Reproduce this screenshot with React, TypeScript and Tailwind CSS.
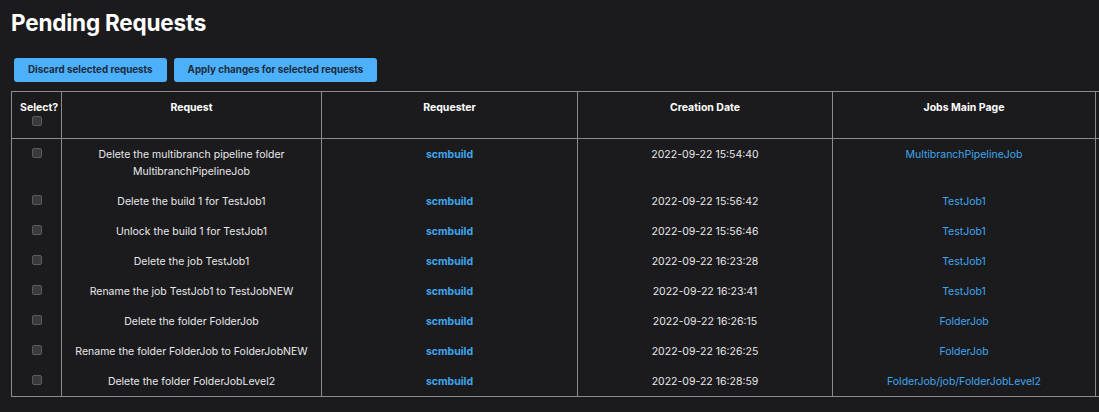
import React from 'react';

const rows = [
    { request: ['Delete the multibranch pipeline folder', 'MultibranchPipelineJob'], date: '2022-09-22 15:54:40', job: 'MultibranchPipelineJob' },
    { request: ['Delete the build 1 for TestJob1'], date: '2022-09-22 15:56:42', job: 'TestJob1' },
    { request: ['Unlock the build 1 for TestJob1'], date: '2022-09-22 15:56:46', job: 'TestJob1' },
    { request: ['Delete the job TestJob1'], date: '2022-09-22 16:23:28', job: 'TestJob1' },
    { request: ['Rename the job TestJob1 to TestJobNEW'], date: '2022-09-22 16:23:41', job: 'TestJob1' },
    { request: ['Delete the folder FolderJob'], date: '2022-09-22 16:26:15', job: 'FolderJob' },
    { request: ['Rename the folder FolderJob to FolderJobNEW'], date: '2022-09-22 16:26:25', job: 'FolderJob' },
    { request: ['Delete the folder FolderJobLevel2'], date: '2022-09-22 16:28:59', job: 'FolderJob/job/FolderJobLevel2' },
];

const Box = () => (
    <span className="inline-block w-[10px] h-[10px] rounded-[2px] border border-[#5a5a5e] bg-[#3a3a3d]" />
);

const cell = 'border border-[#8c8c8c] align-top text-center px-2';

export default function App() {
    return (
        <div className="w-[1099px] h-[412px] overflow-hidden bg-[#1b1b1d] text-[#e8e8ea] font-['Inter','Noto_Sans',sans-serif]">
            <h1 className="pl-[11px] pt-[8px] text-[22.5px] leading-[30px] font-bold text-white tracking-[-0.2px]">Pending Requests</h1>

            <div className="flex gap-[7px] pl-[14px] mt-[20px]">
                <button className="h-[24px] px-[14px] rounded-[3px] bg-[#4cb0fb] text-[#1c2b3c] text-[9.8px] font-bold">Discard selected requests</button>
                <button className="h-[24px] px-[14px] rounded-[3px] bg-[#4cb0fb] text-[#1c2b3c] text-[9.8px] font-bold">Apply changes for selected requests</button>
            </div>

            <table className="ml-[11px] mt-[9px] table-fixed border-collapse w-[1284px] text-[10.5px] leading-[17px]">
                <colgroup>
                    <col className="w-[50px]" />
                    <col className="w-[260px]" />
                    <col className="w-[256px]" />
                    <col className="w-[255px]" />
                    <col className="w-[263px]" />
                    <col className="w-[200px]" />
                </colgroup>
                <thead>
                    <tr className="h-[47px] font-bold text-white">
                        <th className={`${cell} pt-[7px] px-0`}>
                            <div>Select?</div>
                            <div className="leading-[12px]"><Box /></div>
                        </th>
                        <th className={`${cell} pt-[7px]`}>Request</th>
                        <th className={`${cell} pt-[7px]`}>Requester</th>
                        <th className={`${cell} pt-[7px]`}>Creation Date</th>
                        <th className={`${cell} pt-[7px]`}>Jobs Main Page</th>
                        <th className={`${cell} pt-[7px]`}></th>
                    </tr>
                </thead>
                <tbody>
                    {rows.map((r, i) => {
                        const last = i === rows.length - 1 ? 'border-b' : '';
                        const td = `${cell} border-y-0 pt-[7px] pb-[6px] ${last}`;
                        return (
                            <tr key={i}>
                                <td className={`${td} px-0`}>
                                    <Box />
                                </td>
                                <td className={td}>
                                    {r.request.map((l) => (
                                        <div key={l}>{l}</div>
                                    ))}
                                </td>
                                <td className={`${td} font-bold text-[#3fa6ee]`}>scmbuild</td>
                                <td className={td}>{r.date}</td>
                                <td className={`${td} text-[#3fa6ee]`}>{r.job}</td>
                                <td className={td}></td>
                            </tr>
                        );
                    })}
                </tbody>
            </table>
        </div>
    );
}
